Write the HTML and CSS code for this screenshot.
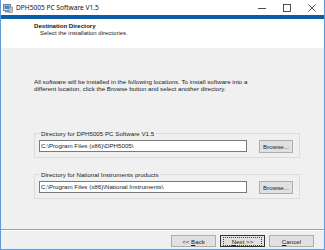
FILE: index.html
```html
<!DOCTYPE html>
<html lang="en">

<head>
    <meta charset="UTF-8">
    <title>DPH5005 PC Software V1.5</title>
    <link rel="stylesheet" href="styles.css">
</head>

<body>
    <div class="window">
        <div class="titlebar">
            <svg class="app-icon" width="10" height="10" viewBox="0 0 10 10">
                <rect x="0.5" y="1.5" width="7" height="6" fill="#dfe6ee" stroke="#6f7f90"/>
                <rect x="1.5" y="2.5" width="5" height="3.5" fill="#3f86d0"/>
                <rect x="2" y="8" width="5" height="1.5" fill="#8b98a6"/>
                <rect x="6" y="4" width="3.5" height="5.5" fill="#b8c3cf" stroke="#6f7f90" stroke-width="0.6"/>
            </svg>
            <span class="title">DPH5005 PC Software V1.5</span>
            <div class="controls">
                <span class="ctl">
                    <svg width="8" height="8" viewBox="0 0 8 8"><path d="M0 4.5h8" stroke="#222" stroke-width="0.8"/></svg>
                </span>
                <span class="ctl">
                    <svg width="8" height="8" viewBox="0 0 8 8"><rect x="0.5" y="0.5" width="7" height="7" fill="none" stroke="#222" stroke-width="0.8"/></svg>
                </span>
                <span class="ctl">
                    <svg width="8" height="8" viewBox="0 0 8 8"><path d="M0.5 0.5l7 7M7.5 0.5l-7 7" stroke="#222" stroke-width="0.8"/></svg>
                </span>
            </div>
        </div>
        <div class="accent"></div>

        <div class="header">
            <div class="heading">Destination Directory</div>
            <div class="subheading">Select the installation directories.</div>
        </div>

        <div class="content">
            <p class="intro">All software will be installed in the following locations. To install software into a
                different location, click the Browse button and select another directory.</p>

            <fieldset class="group">
                <legend>Directory for DPH5005 PC Software V1.5</legend>
                <div class="row">
                    <input class="path" type="text" value="C:\Program Files (x86)\DPH5005\">
                    <button class="btn browse">Browse...</button>
                </div>
            </fieldset>

            <fieldset class="group second">
                <legend>Directory for National Instruments products</legend>
                <div class="row">
                    <input class="path" type="text" value="C:\Program Files (x86)\National Instruments\">
                    <button class="btn browse">Browse...</button>
                </div>
            </fieldset>
        </div>

        <div class="footer">
            <button class="btn">&lt;&lt; <u>B</u>ack</button>
            <button class="btn default"><span class="focus"><u>N</u>ext &gt;&gt;</span></button>
            <button class="btn"><u>C</u>ancel</button>
        </div>
    </div>
</body>

</html>
```

FILE: styles.css
```css
* {
    box-sizing: border-box;
}

body {
    margin: 0;
    font-family: "Liberation Sans", Arial, sans-serif;
    color: #222;
    background-color: #f0f0f0;
}

.window {
    width: 325px;
    height: 250px;
    display: flex;
    flex-direction: column;
    border-left: 1px solid #5f9bd8;
    border-right: 1px solid #5f9bd8;
    border-bottom: 1px solid #5f9bd8;
    background-color: #f0f0f0;
}

.titlebar {
    height: 15px;
    display: flex;
    align-items: center;
    background-color: #fff;
    padding-left: 2px;
}

.app-icon {
    margin-right: 3px;
}

.title {
    font-family: "Noto Sans", "Liberation Sans", sans-serif;
    font-size: 6.6px;
    color: #111;
}

.controls {
    margin-left: auto;
    display: flex;
    height: 100%;
}

.ctl {
    width: 25px;
    display: flex;
    align-items: center;
    justify-content: center;
}

.accent {
    height: 4px;
    background-color: #0a5ea8;
}

.header {
    height: 29px;
    background-color: #fff;
    padding: 3px 0 0 33px;
    font-size: 6px;
    line-height: 7px;
}

.heading {
    font-weight: bold;
    font-size: 6.1px;
    color: #111;
}

.subheading {
    padding-left: 6px;
    margin-top: 1px;
}

.content {
    flex: 1;
    padding: 0 24px 0 33px;
    font-size: 6.2px;
    line-height: 7.3px;
}

.intro {
    margin: 30px 0 0 0;
    width: 214px;
}

.group {
    margin: 38px 0 0 0;
    padding: 2px 4px 4px 4px;
    border: 1px solid #dcdcdc;
    min-width: 0;
}

.group.second {
    margin-top: 14px;
}

.group legend {
    padding: 0 1px;
    margin-left: 1px;
    line-height: 6px;
}

.row {
    display: flex;
    align-items: center;
    gap: 12px;
}

.path {
    width: 208px;
    height: 12px;
    padding: 0 1px;
    border: 1px solid #7a7a7a;
    background-color: #fff;
    font-family: "Liberation Sans", Arial, sans-serif;
    font-size: 6.2px;
    color: #222;
}

.btn {
    height: 12px;
    width: 45px;
    padding: 0;
    border: 1px solid #adadad;
    background-color: #e1e1e1;
    font-family: "Liberation Sans", Arial, sans-serif;
    font-size: 6.2px;
    color: #222;
}

.browse {
    width: 34px;
    height: 13px;
    margin-top: 1px;
}

.footer {
    height: 20px;
    border-top: 1px solid #a0a0a0;
    box-shadow: inset 0 1px 0 #fff;
    display: flex;
    justify-content: flex-end;
    align-items: flex-start;
    gap: 4px;
    padding: 5px 10px 0 0;
}

.default {
    border-color: #333;
}

.focus {
    display: inline-block;
    border: 1px dotted #444;
    padding: 0 8px;
    line-height: 7px;
}
```
